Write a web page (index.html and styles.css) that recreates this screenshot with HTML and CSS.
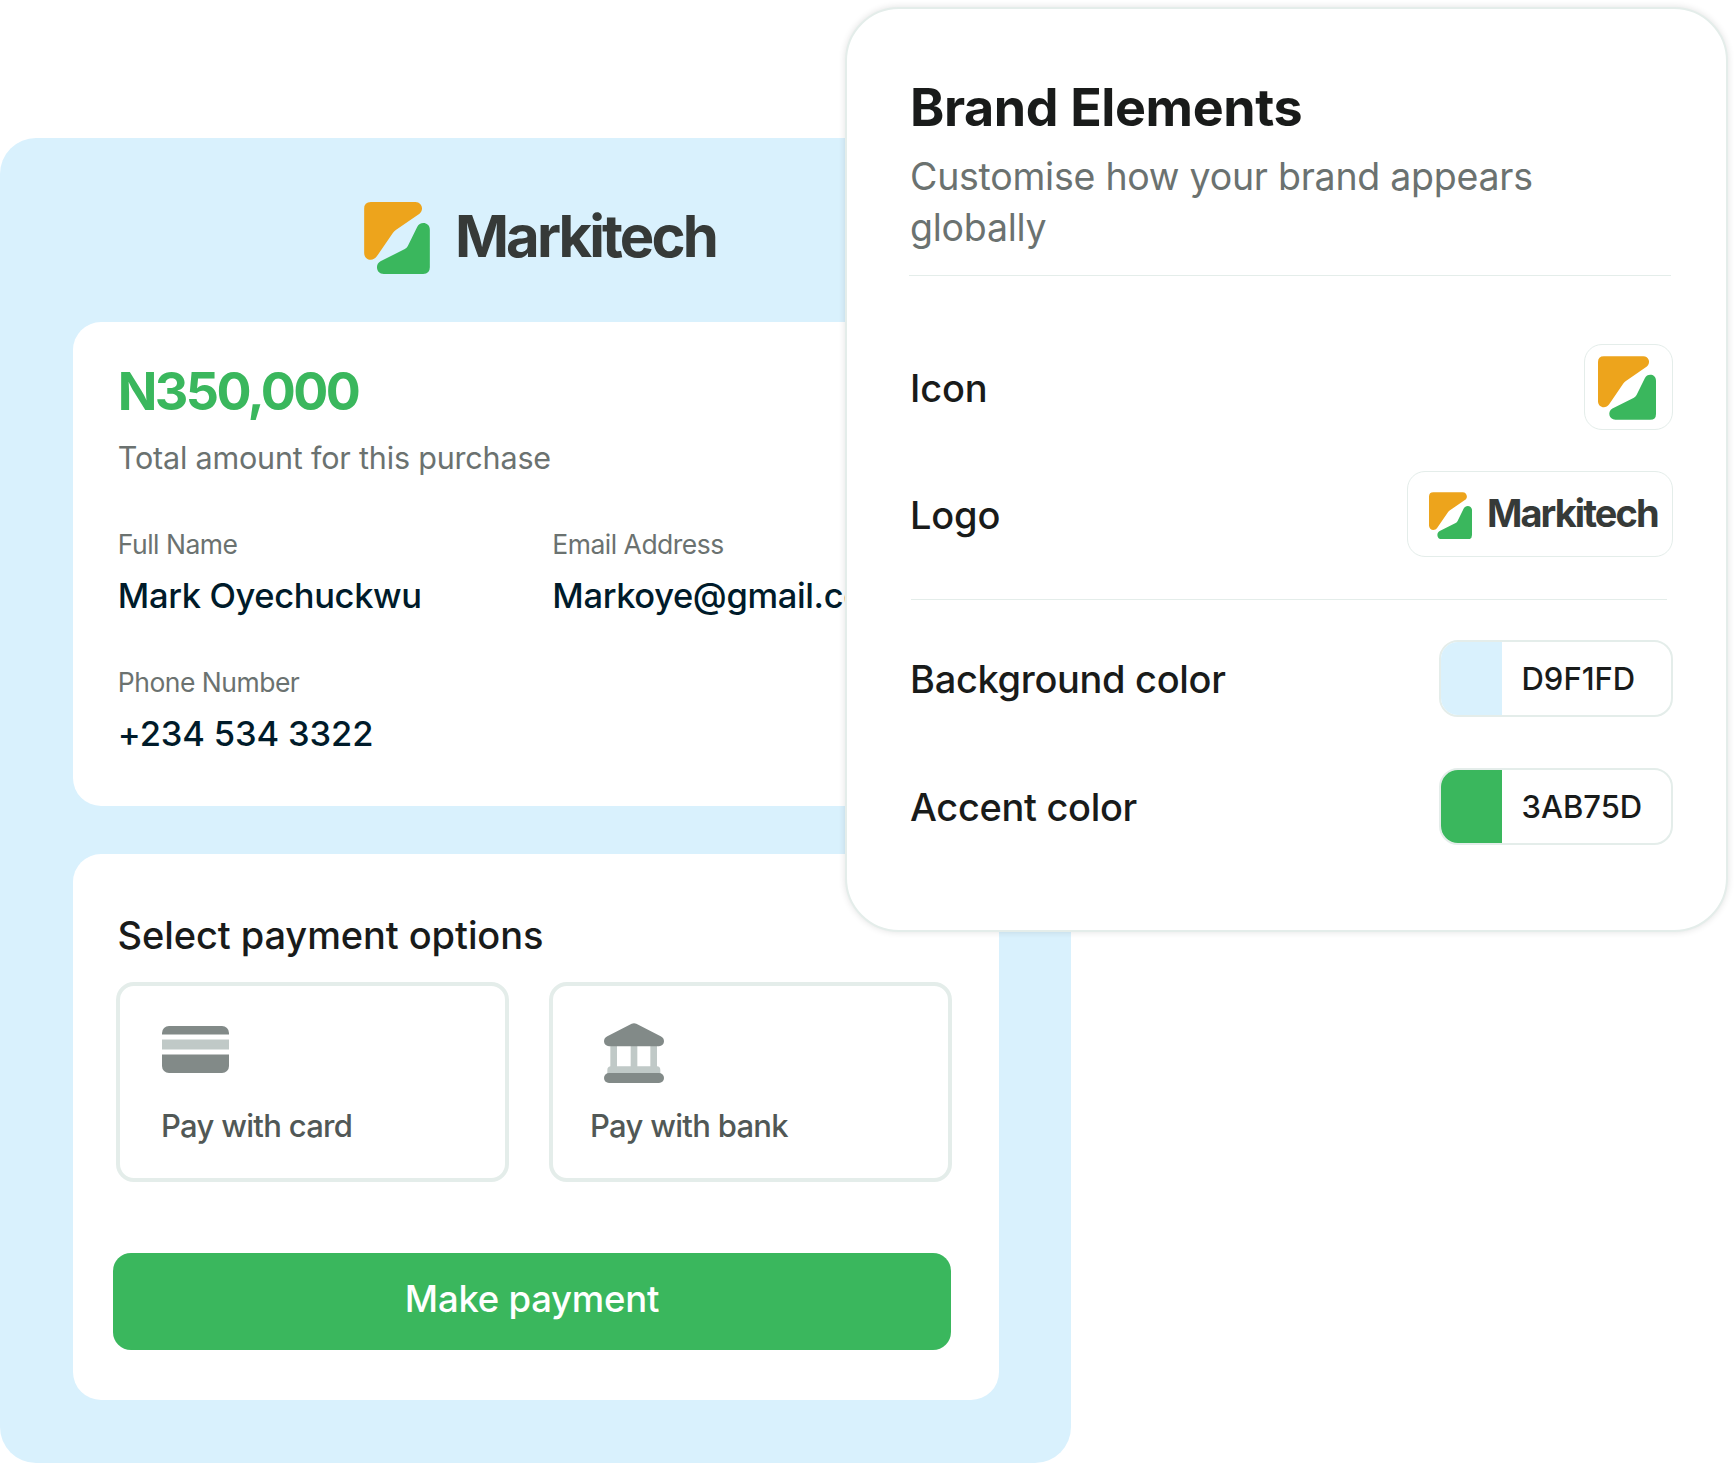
FILE: index.html
```html
<!DOCTYPE html>
<html lang="en">
<head>
<meta charset="utf-8">
<title>Markitech checkout</title>
<link rel="stylesheet" href="styles.css">
</head>
<body>
<svg class="sprite" width="0" height="0" aria-hidden="true">
  <symbol id="mark" viewBox="0 0 197 216">
    <path fill="#eda41c" d="M20 0H154C172 0 181 22 166 35L96 83Q90 87 86 93L38 163C26 181 0 174 0 153V20Q0 0 20 0Z"/>
    <path fill="#3ab75d" d="M159 75C167 57 197 60 197 83V196Q197 216 177 216H59C37 216 31 188 49 178L122 141Q128 138 131 132Z"/>
  </symbol>
</svg>
<main class="stage">
  <section class="checkout">
    <header class="brand">
      <svg class="brand-mark"><use href="#mark"/></svg>
      <span class="brand-name">Markitech</span>
    </header>

    <div class="card summary">
      <div class="amount">N350,000</div>
      <div class="caption">Total amount for this purchase</div>
      <dl class="details">
        <div class="field">
          <dt>Full Name</dt>
          <dd>Mark Oyechuckwu</dd>
        </div>
        <div class="field">
          <dt>Email Address</dt>
          <dd>Markoye@gmail.com</dd>
        </div>
        <div class="field">
          <dt>Phone Number</dt>
          <dd class="digits">+234 534 3322</dd>
        </div>
      </dl>
    </div>

    <div class="card payment">
      <h2>Select payment options</h2>
      <div class="options">
        <div class="option">
          <div class="option-icon card-icon">
            <svg width="67" height="48" viewBox="0 0 67 48">
              <path fill="#828a88" d="M0 8.500V7a7 7 0 0 1 7-7H60a7 7 0 0 1 7 7V8.500Z"/>
              <path fill="#c0c9c7" d="M0 13.500H67V23.500H0Z"/>
              <path fill="#828a88" d="M0 28.500H67V40a7 7 0 0 1-7 7H7a7 7 0 0 1-7-7Z"/>
            </svg>
          </div>
          <span>Pay with card</span>
        </div>
        <div class="option">
          <div class="option-icon bank-icon">
            <svg width="60" height="60" viewBox="0 0 180 180">
              <path fill="#c0c9c7" d="M19 65H39V130H80V65H100V130H139V65H159V130A11 11 0 0 1 169 141V155H10V141A11 11 0 0 1 19 130Z"/>
              <path fill="#828a88" d="M83 2Q90-1 97 2L170 40Q180 45 180 55A15 15 0 0 1 165 70H15A15 15 0 0 1 0 55Q0 45 10 40Z"/>
              <rect fill="#828a88" y="150" width="180" height="30" rx="15"/>
            </svg>
          </div>
          <span>Pay with bank</span>
        </div>
      </div>
      <button class="pay" type="button">Make payment</button>
    </div>
  </section>

  <aside class="panel">
    <h1>Brand Elements</h1>
    <p class="intro">Customise how your brand appears globally</p>
    <hr class="rule-top">
    <div class="row row-asset">
      <span class="label label-short">Icon</span>
      <div class="tile tile-icon"><svg class="tile-mark"><use href="#mark"/></svg></div>
    </div>
    <div class="row row-asset">
      <span class="label label-short">Logo</span>
      <div class="tile tile-logo">
        <svg class="logo-mark"><use href="#mark"/></svg>
        <span class="logo-name">Markitech</span>
      </div>
    </div>
    <hr class="rule-mid">
    <div class="row row-color">
      <span class="label">Background color</span>
      <div class="swatch"><i class="chip chip-sky"></i><span>D9F1FD</span></div>
    </div>
    <div class="row row-color">
      <span class="label">Accent color</span>
      <div class="swatch"><i class="chip chip-green"></i><span>3AB75D</span></div>
    </div>
  </aside>
</main>
</body>
</html>
```
FILE: styles.css
```css
* { box-sizing: border-box; }

body {
  margin: 0;
  background: #fff;
  font-family: Inter, "Liberation Sans", sans-serif;
  color: #191b1a;
}

h1, h2, p, dl, dd, hr { margin: 0; }

svg { display: block; flex: none; }

.sprite { position: absolute; }

.stage {
  position: relative;
  width: 1734px;
  height: 1463px;
  padding-top: 138px;
  overflow: hidden;
}

/* Checkout */
.checkout {
  width: 1071px;
  height: 1325px;
  padding: 0 72px 0 72.600px;
  border-radius: 36px;
  background: #d9f1fd;
}

.brand {
  display: flex;
  height: 184px;
  padding: 64px 0 0 291.400px;
}

.brand-mark { width: 66px; height: 72px; }

.brand-name {
  margin: -2.500px 0 0 25px;
  font-size: 58px;
  line-height: 72px;
  font-weight: 700;
  letter-spacing: -2.900px;
  color: #363a38;
}

.card {
  border-radius: 28px;
  background: #fff;
}

.summary {
  height: 484px;
  padding: 40px 0 0 45.200px;
}

.amount {
  font-size: 52px;
  line-height: 60px;
  font-weight: 700;
  letter-spacing: -2.560px;
  color: #3ab75d;
}

.caption {
  margin-top: 18px;
  font-size: 30.500px;
  line-height: 36px;
  letter-spacing: -0.180px;
  color: #6b7270;
}

.details {
  display: grid;
  grid-template-columns: 434.500px 1fr;
  row-gap: 49px;
  margin-top: 52px;
}

.field { white-space: nowrap; }

dt {
  font-size: 26.500px;
  line-height: 32px;
  letter-spacing: -0.500px;
  color: #6b7270;
}

dd {
  margin-top: 15px;
  font-size: 34.500px;
  line-height: 42px;
  font-weight: 500;
  letter-spacing: -0.360px;
  color: #001b2a;
}

.digits { letter-spacing: -0.140px; }

.payment {
  height: 546px;
  margin-top: 48px;
  padding: 58px 47.500px 0 40.400px;
}

h2 {
  margin-left: 4.500px;
  font-size: 38px;
  line-height: 46px;
  font-weight: 500;
  letter-spacing: -0.080px;
}

.options {
  display: grid;
  grid-template-columns: 393px 403px;
  column-gap: 40px;
  margin: 24px 0 0 3px;
}

.option {
  height: 200px;
  padding: 36px 0 0 41px;
  border: 4px solid #e4edea;
  border-radius: 18px;
  font-size: 31px;
  line-height: 38px;
  font-weight: 500;
  letter-spacing: -0.700px;
  color: #515856;
}

.option + .option { padding-left: 37px; }

.option-icon { height: 85px; }
.card-icon { padding: 4px 0 0 1px; }
.bank-icon { padding: 0.500px 0 0 14px; }

.pay {
  display: block;
  width: 838px;
  height: 97.500px;
  margin-top: 70.500px;
  padding: 0 0 5px;
  border: 0;
  border-radius: 18px;
  background: #3ab75d;
  font: 500 36.500px/44px Inter, sans-serif;
  letter-spacing: -0.240px;
  color: #fff;
}

/* Brand panel, floating over the checkout */
.panel {
  position: absolute;
  top: 7px;
  left: 845px;
  width: 882.500px;
  height: 925px;
  padding: 69px 53px 0 63px;
  border: 2px solid #e4edea;
  border-radius: 54px;
  background: #fff;
  box-shadow: 0 0 7px rgba(0, 0, 0, 0.12);
}

h1 {
  font-size: 52px;
  line-height: 60px;
  font-weight: 700;
  letter-spacing: -0.400px;
}

.intro {
  width: 700px;
  margin-top: 13px;
  font-size: 37.500px;
  line-height: 51px;
  letter-spacing: -0.250px;
  color: #6b7270;
}

hr {
  height: 1px;
  border: 0;
  background: #e4edea;
}

.rule-top { margin: 22px 1.500px 68px -1px; }

.row {
  display: flex;
  align-items: center;
  justify-content: space-between;
}

.row-asset { height: 86px; }
.row-asset + .row-asset { margin-top: 41px; }
.row-color { height: 77px; }
.row-color + .row-color { margin-top: 50.500px; }

.label {
  padding-top: 1px;
  font-size: 38px;
  line-height: 46px;
  font-weight: 500;
  letter-spacing: -0.330px;
}

.label-short {
  padding-top: 1px;
  letter-spacing: -0.200px;
}

.tile {
  display: flex;
  height: 86px;
  border: 1px solid #e4edea;
  border-radius: 18px;
}

.tile-icon {
  width: 89px;
  padding: 10.500px 0 0 13.500px;
}

.tile-mark { width: 58px; height: 64px; }

.tile-logo {
  width: 265.500px;
  padding: 19.500px 0 0 20.500px;
}

.logo-mark { width: 43px; height: 47.500px; }

.logo-name {
  margin: -1.500px 0 0 15.500px;
  font-size: 38px;
  line-height: 46px;
  font-weight: 700;
  letter-spacing: -1.930px;
  color: #363a38;
}

.rule-mid { margin: 42px 5.500px 40px 1px; }

.swatch {
  display: flex;
  align-items: center;
  width: 233.500px;
  height: 77px;
  overflow: hidden;
  border: 2px solid #e4edea;
  border-radius: 19px;
  font-size: 31px;
  line-height: 38px;
  font-weight: 500;
}

.swatch span { padding-top: 1px; }

.chip {
  align-self: stretch;
  width: 61px;
  margin-right: 19.500px;
}

.chip-sky { background: #d9f1fd; }
.chip-green { background: #3ab75d; }
```
